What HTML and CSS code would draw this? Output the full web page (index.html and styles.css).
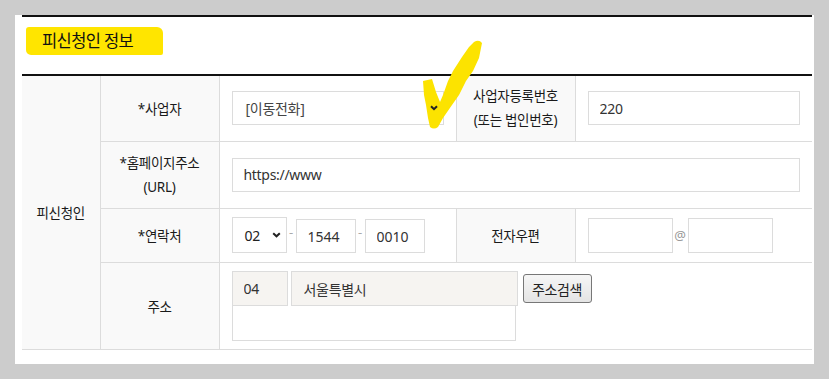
FILE: index.html
```html
<!DOCTYPE html>
<html lang="ko">

<head>
  <meta charset="UTF-8">
  <meta name="viewport" content="width=device-width, initial-scale=1.0">
  <title>피신청인 정보</title>
  <link rel="stylesheet" href="styles.css">
</head>

<body>

  <section class="panel">
    <header class="title-bar">
      <h2 class="title"><span class="marker">피신청인 정보</span></h2>
    </header>

    <table class="form-table">
      <colgroup>
        <col class="c-group">
        <col class="c-label">
        <col class="c-value">
        <col class="c-label">
        <col class="c-value">
      </colgroup>
      <tbody>
        <tr class="row-biz">
          <th class="group" rowspan="4">피신청인</th>
          <th>*사업자</th>
          <td>
            <div class="select">
              <span>[이동전화]</span>
              <svg class="chevron" width="8" height="6" viewBox="0 0 8 6"><path d="M1 1.2 L4 4.2 L7 1.2" /></svg>
            </div>
          </td>
          <th class="two-line">사업자등록번호<br>(또는 법인번호)</th>
          <td><input class="field" type="text" value="220"></td>
        </tr>
        <tr class="row-url">
          <th class="two-line">*홈페이지주소<br>(URL)</th>
          <td colspan="3"><input class="field" type="text" value="https://www"></td>
        </tr>
        <tr class="row-tel">
          <th>*연락처</th>
          <td>
            <div class="inline-group">
              <div class="select select-small">
                <span>02</span>
                <svg class="chevron" width="9" height="6" viewBox="0 0 9 6"><path d="M1.2 1.2 L4.5 4.3 L7.8 1.2" /></svg>
              </div>
              <span class="dash">-</span>
              <input class="field field-tel" type="text" value="1544">
              <span class="dash">-</span>
              <input class="field field-tel" type="text" value="0010">
            </div>
          </td>
          <th>전자우편</th>
          <td>
            <div class="inline-group">
              <input class="field field-mail" type="text">
              <span class="at">@</span>
              <input class="field field-mail" type="text">
            </div>
          </td>
        </tr>
        <tr class="row-addr">
          <th>주소</th>
          <td colspan="3">
            <div class="addr">
              <div class="addr-line">
                <input class="field field-zip" type="text" value="04&nbsp;&nbsp;&nbsp;&nbsp;&nbsp;." readonly>
                <input class="field field-road" type="text" value="서울특별시" readonly>
                <button class="btn" type="button">주소검색</button>
              </div>
              <input class="field field-detail" type="text">
            </div>
          </td>
        </tr>
      </tbody>
    </table>

    <!-- hand drawn check mark over the select -->
    <svg class="check" width="65" height="92" viewBox="420 40 65 92" aria-hidden="true">
      <path d="M423 81 L432 79 L436 92 L440 102 L443 95 L448 81 L453 71 L462 57 L469 47 L474 42 Q479 39 482 43 L481 48 L479 58 L473 71 L466 81 L459 95 L452 105 L443 118 L438 127 Q434 130 430 127 L428 118 L426 105 L424 95 Z" />
    </svg>
  </section>

</body>

</html>
```

FILE: styles.css
```css
* {
  box-sizing: border-box;
}

body {
  margin: 0;
  padding: 15px;
  background: #cccccc;
  font-family: "Noto Sans", "Noto Sans CJK KR", sans-serif;
  color: #222;
}

.panel {
  position: relative;
  width: 799px;
  height: 349px;
  background: #fff;
  padding: 0 2px 0 7px;
}

.title-bar {
  border-top: 2px solid #111;
  height: 59px;
  padding: 10px 0 0 4px;
}

.title {
  margin: 0;
  font-size: 16.5px;
  font-weight: 400;
  line-height: 28px;
  letter-spacing: -0.6px;
}

.marker {
  display: inline-block;
  height: 28px;
  padding: 0 30px 0 16px;
  background: #ffe500;
  border-radius: 3px 6px 2px 5px;
  color: #111;
}

/* table */

.form-table {
  width: 790px;
  table-layout: fixed;
  border-collapse: collapse;
  border-top: 2px solid #111;
  font-size: 13.5px;
  letter-spacing: -0.3px;
}

.c-group {
  width: 78px;
}

.c-label {
  width: 119px;
}

.c-value {
  width: 237px;
}

.form-table th,
.form-table td {
  border-bottom: 1px solid #dcdcdc;
  padding: 0 12px;
}

.form-table th {
  background: #f9f9f9;
  font-weight: 400;
  text-align: center;
  border-left: 1px solid #dcdcdc;
  border-right: 1px solid #dcdcdc;
  padding: 0;
  color: #1a1a1a;
}

.form-table th.group {
  border-left: none;
}

.form-table th.two-line {
  line-height: 24px;
}

.row-biz {
  height: 66px;
}

.row-url {
  height: 67px;
}

.row-tel {
  height: 54px;
}

.row-addr {
  height: 87px;
}

/* controls */

.field {
  display: block;
  width: 100%;
  height: 34px;
  border: 1px solid #dcdcdc;
  background: #fff;
  padding: 0 11px;
  font-family: inherit;
  font-size: 14px;
  letter-spacing: -0.3px;
  color: #333;
  outline: none;
}

.select {
  display: flex;
  align-items: center;
  justify-content: space-between;
  height: 34px;
  border: 1px solid #dcdcdc;
  padding: 0 5px 0 13px;
  font-size: 14px;
  color: #444;
}

.select-small {
  width: 55px;
  height: 36px;
  padding: 0 5px 0 12px;
  color: #222;
}

.chevron {
  position: relative;
  z-index: 2;
}

.chevron path {
  fill: none;
  stroke: #222;
  stroke-width: 2;
}

.inline-group {
  display: flex;
  align-items: center;
}

.dash {
  width: 9px;
  text-align: center;
  color: #aaa;
  font-size: 13px;
  margin-top: -6px;
}

.field-tel {
  width: 60px;
  padding: 0 11px;
  letter-spacing: 0;
}

.dash + .field-tel {
  margin-top: 2px;
}

.field-mail {
  width: 85px;
  height: 35px;
}

.at {
  width: 15px;
  text-align: center;
  color: #999;
  font-size: 13px;
}

.addr {
  width: 360px;
  padding: 1px 0 0;
}

.addr-line {
  display: flex;
  align-items: center;
  width: 360px;
}

.field-zip,
.field-road {
  background: #f6f4f1;
  height: 35px;
}

.field-zip {
  width: 56px;
}

.field-road {
  width: 227px;
  margin-left: 3px;
  padding-left: 12px;
}

.field-detail {
  width: 284px;
  height: 35px;
  border-top: none;
}

.btn {
  margin-left: 5px;
  width: 69px;
  height: 29px;
  border: 1px solid #777;
  border-radius: 3px;
  background: linear-gradient(#f6f6f6, #e4e4e4);
  font-family: inherit;
  font-size: 14px;
  letter-spacing: -0.4px;
  color: #222;
  padding: 0;
}

.check {
  position: absolute;
  z-index: 1;
  left: 405px;
  top: 25px;
}

.check path {
  fill: #fce300;
}
```
